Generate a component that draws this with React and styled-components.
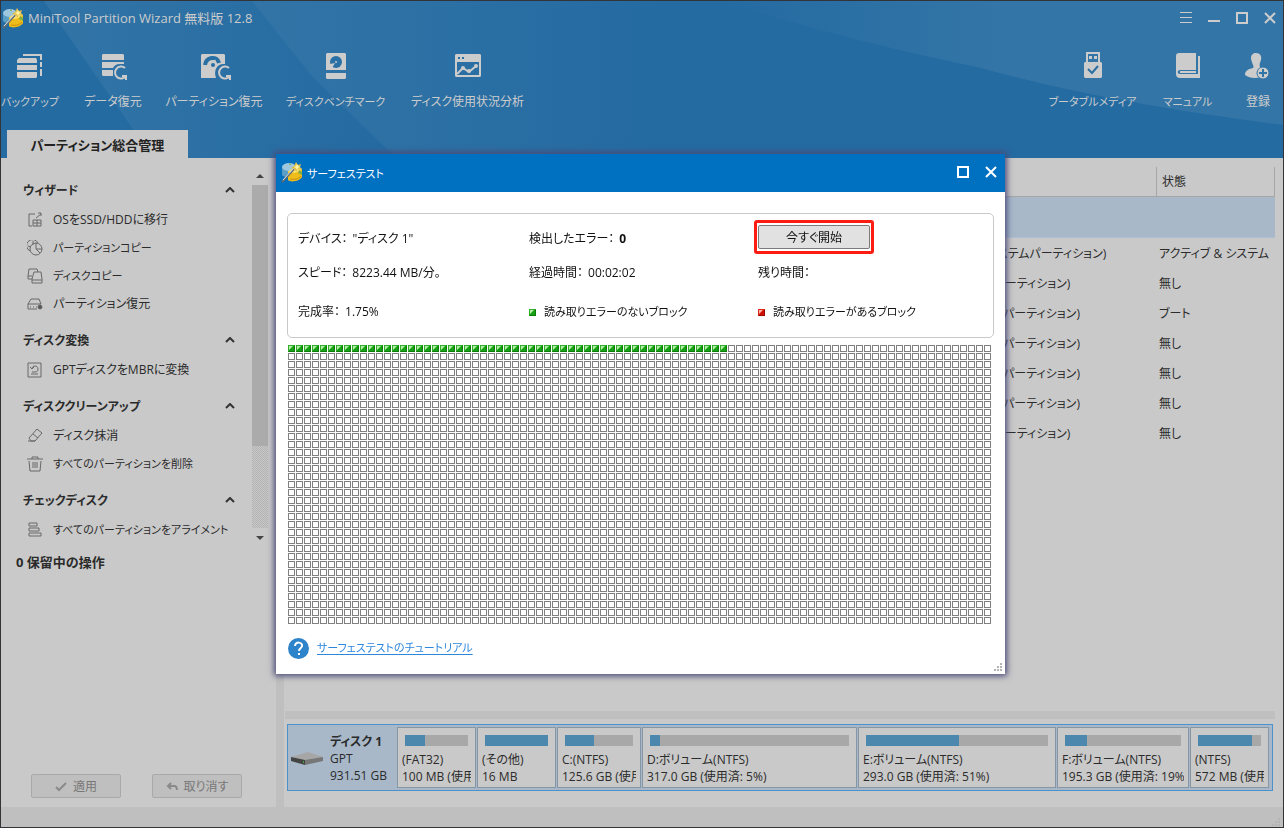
import React from 'react'
import styled, { createGlobalStyle } from 'styled-components'

const GlobalStyle = createGlobalStyle`
  * {
    box-sizing: border-box;
  }

  body {
    margin: 0;
    color: #2b2b2b;
    font-family: 'Open Sans', 'Noto Sans CJK JP', sans-serif;
    font-size: 12px;
    line-height: 18px;
    font-feature-settings: 'palt';
  }

  button {
    padding: 0;
    border: 0;
    background: none;
    color: inherit;
    font: inherit;
    font-feature-settings: inherit;
  }
`

const Window = styled.div`
  display: flex;
  flex-direction: column;
  height: 100vh;
  overflow: hidden;
  border: 1px solid #333438;
  background: #c9c9c9;
`

const Header = styled.header`
  position: relative;
  display: flex;
  flex-direction: column;
  flex: none;
  height: 157px;
  background: #246ba2;
  color: #cccccc;
`

const Backdrop = styled.svg`
  position: absolute;
  inset: 0;
  width: 100%;
  height: 100%;
`

const TitleBar = styled.div`
  position: relative;
  display: flex;
  align-items: center;
  justify-content: space-between;
  height: 34px;
  padding: 0 6px 0 1px;
`

const TitleText = styled.h1`
  display: flex;
  align-items: center;
  gap: 4px;
  margin: 0;
  font-size: ${(props) => (props.$large ? '13px' : '11px')};
  font-weight: 400;
`

const Controls = styled.div`
  display: flex;
  align-items: center;
  gap: 14px;
`

const ControlButton = styled.button`
  width: 14px;
  height: 14px;

  svg {
    display: block;
  }
`

const Toolbar = styled.nav`
  position: relative;
  display: flex;
  justify-content: space-between;
  height: 95px;
  padding: 17px 5px 0 0;
`

const ToolGroup = styled.div`
  display: flex;
  align-items: flex-start;
  gap: 25px;
`

const ToolButton = styled.button`
  display: flex;
  flex-direction: column;
  align-items: center;
  gap: 11px;
  width: ${(props) => props.$width}px;
  font-size: ${(props) => (props.$compact ? '11px' : '12px')};
  white-space: nowrap;

  svg {
    overflow: visible;
  }
`

const Tab = styled.button`
  position: relative;
  width: 181px;
  height: 28px;
  margin-left: 6px;
  padding-top: 2px;
  background: #c9c9c9;
  color: #222222;
  font-size: 13px;
  font-weight: 700;
`

const Body = styled.div`
  display: flex;
  flex: 1;
  min-height: 0;
`

const Sidebar = styled.aside`
  display: flex;
  flex-direction: column;
  flex: none;
  width: 275px;
`

const ScrollArea = styled.div`
  display: flex;
  height: 389px;
`

const Sections = styled.div`
  flex: 1;
  padding-top: 18px;
`

const Section = styled.section`
  margin-bottom: 8px;
`

const SectionTitle = styled.h2`
  display: flex;
  align-items: center;
  justify-content: space-between;
  height: 30px;
  margin: 0;
  padding: 0 17px 0 22px;
  font-size: 12px;
  font-weight: 700;
`

const SideItem = styled.button`
  display: flex;
  align-items: center;
  gap: 10px;
  width: 100%;
  height: 28px;
  padding-left: 26px;
  font-size: ${(props) => (props.$compact ? '11px' : '12px')};
  white-space: nowrap;
`

const Scrollbar = styled.div`
  display: flex;
  flex-direction: column;
  width: 16px;
  margin: 8px 8px 0 0;
`

const ScrollArrow = styled.button`
  display: flex;
  align-items: center;
  justify-content: center;
  height: 19px;
`

const ScrollTrack = styled.div`
  flex: 1;
  background: repeating-conic-gradient(#b2b2b2 0 25%, #c9c9c9 0 50%) 0 0 / 2px 2px;
`

const ScrollThumb = styled.div`
  height: 76%;
  background: #ababab;
`

const Pending = styled.p`
  margin: 6px 0 0 15px;
  font-size: 13px;
  font-weight: 700;
`

const SideActions = styled.div`
  display: flex;
  gap: 31px;
  margin: auto 0 9px 30px;
`

const ActionButton = styled.button`
  display: flex;
  align-items: center;
  justify-content: center;
  gap: 6px;
  width: 90px;
  height: 24px;
  padding-top: 2px;
  border: 1px solid #a9a9a9;
  border-radius: 2px;
  background: #bfbfbf;
  color: #777777;
`

const Splitter = styled.div`
  flex: none;
  width: 8px;
  background: #bfbfbf;
`

const Main = styled.main`
  display: flex;
  flex-direction: column;
  flex: 1;
  min-width: 0;
  padding: 9px 8px 16px 1px;
`

const Table = styled.table`
  width: 100%;
  table-layout: fixed;
  border-collapse: separate;
  border-spacing: 0;
`

const HeadCell = styled.th`
  width: ${(props) => props.$width || 'auto'};
  height: 30px;
  padding: 1px 0 0 5px;
  border-right: 1px solid #a6a6a6;
  border-bottom: 1px solid #a6a6a6;
  font-weight: 400;
  text-align: left;
`

const Row = styled.tr`
  height: ${(props) => (props.$selected ? '41px' : '30px')};

  td {
    padding: 2px 0 0 2px;
    border-bottom: ${(props) => (props.$selected ? '1px solid #afc0d4' : '0')};
    background: ${(props) => (props.$selected ? '#a8b8c9' : 'none')};
    white-space: nowrap;
  }
`

const HorizontalSplitter = styled.div`
  height: 8px;
  margin: auto 0 5px;
  background: #bfbfbf;
`

const DiskStrip = styled.div`
  display: flex;
  gap: 1px;
  height: 67px;
  margin: 0 2px;
  padding: 2px 3px 2px 0;
  border: 1px solid #4a92cb;
  background: #a8b8c9;
`

const DiskInfo = styled.div`
  display: flex;
  align-items: center;
  flex: none;
  gap: 7px;
  width: 108px;
  padding: 2px 0 0 3px;
  line-height: 17px;
  white-space: nowrap;
`

const Volume = styled.div`
  flex: ${(props) => props.$grow} 1 0;
  min-width: 0;
  padding: 7px 4px 0;
  border: 1px solid #8796a5;
  background: #c9c9c9;
  line-height: 17px;
`

const Usage = styled.div`
  height: 11px;
  margin: 0 3px 5px;
  background: #a8a8a8;
`

const Used = styled.div`
  height: 100%;
  background: #4c88ae;
`

const VolumeText = styled.div`
  overflow: hidden;
  white-space: nowrap;
`

const StatusBar = styled.footer`
  display: flex;
  align-items: flex-end;
  justify-content: flex-end;
  flex: none;
  height: 20px;
  padding: 0 2px 0 0;
  background: #bfbfbf;
`

const Overlay = styled.div`
  position: fixed;
  inset: 0;
  display: flex;
  align-items: center;
  justify-content: center;
  padding-right: 3px;
`

const Dialog = styled.section`
  background: #ffffff;
  color: #111111;
  box-shadow: 0 0 6px 2px #4a4a78;
`

const DialogTitleBar = styled.div`
  display: flex;
  align-items: center;
  justify-content: space-between;
  height: 38px;
  padding: 0 7px 2px 5px;
  background: #0070c1;
  color: #ffffff;

  span {
    padding-top: 3px;
  }
`

const DialogBody = styled.div`
  display: flex;
  flex-direction: column;
  padding: 21px 2px 2px 11px;
`

const InfoPanel = styled.div`
  display: grid;
  grid-template-columns: 231px 229px 1fr;
  grid-template-rows: 34px 34px 44px;
  align-items: center;
  height: 125px;
  margin: 0 9px 7px 0;
  padding: 8px 0 0 10px;
  border: 1px solid #c8c8c8;
  border-radius: 5px;
  white-space: nowrap;
`

const Field = styled.div`
  display: flex;
  align-items: center;
  gap: 5px;
`

const Legend = styled(Field)`
  gap: 8px;
  font-size: 11px;
`

const StartFrame = styled.div`
  align-self: start;
  width: 120px;
  height: 34px;
  margin: -2px 0 0 -4px;
  padding: 2px 1px;
  border: 3px solid #fd1c12;
  border-radius: 3px;
`

const StartButton = styled.button`
  width: 100%;
  height: 24px;
  padding-top: 1px;
  border: 1px solid #7b7b7b;
  border-radius: 2px;
  background: #e1e1e1;
`

const BlockGrid = styled.div`
  display: grid;
  grid-template-columns: repeat(88, 7px);
  grid-auto-rows: 7px;
  gap: 1px;
  width: max-content;
  margin: 0 12px 0 1px;
`

const Block = styled.span`
  width: 7px;
  height: 7px;
  border: 1px solid #808080;
  background: #ffffff;

  &.clean {
    border-color: #2fae2a #0a7c08 #0a7c08 #2fae2a;
    background: linear-gradient(135deg, #b8efaa 0 30%, #18a015 50% 100%);
  }

  &.failed {
    border-color: #e02818 #980800 #980800 #e02818;
    background: linear-gradient(135deg, #ffb4a4 0 30%, #d01008 50% 100%);
  }
`

const DialogFooter = styled.div`
  display: flex;
  align-items: center;
  gap: 8px;
  height: 48px;
  padding-left: 1px;
  font-size: 11px;

  a {
    color: #2d87dd;
    text-underline-offset: 2px;
  }
`

const GripRow = styled.div`
  display: flex;
  justify-content: flex-end;
  height: 0;
  align-items: flex-end;
`

function WandIcon() {
  return (
    <svg width="22" height="22" viewBox="0 0 22 22">
      <path d="M1 6v8c3 3 6 2 9 1V8z" fill="#5b9ec5" />
      <ellipse cx="8" cy="6" rx="7" ry="4" fill="#9cc7dd" />
      <path d="M7 10c4 2 10 1 14-2v8c-2 4-11 6-14 3z" fill="#efbd19" />
      <path d="M7 11c4 2 10 1 14-3-2-3-10-2-14 3z" fill="#ffe36a" />
      <path d="M9 18c4 1 9 0 11-3" fill="none" stroke="#c98d12" />
      <path d="M1 21L13 8" stroke="#626b73" strokeWidth="2" />
      <path d="M2 19L13 7" stroke="#dce5e5" strokeWidth="1" />
      <path d="M15 1l2 3 3-1-1 3 2 3-4-1-2 3-1-3-4-1 3-2z" fill="#e0c048" />
      <path d="M16 3l1 2 2 1-2 1-1 2-1-2-2-1 2-1z" fill="#fff3a8" />
      <path d="M18 9l3 2v3l-4-2zM9 2l1 2H8z" fill="#7fae45" />
    </svg>
  )
}

function MenuIcon() {
  return (
    <svg width="14" height="14" stroke="currentColor">
      <path d="M1 1.5h12M1 6.5h12M1 11.5h12" />
    </svg>
  )
}

function MinimizeIcon() {
  return (
    <svg width="14" height="14">
      <path d="M1 9h12v2H1z" fill="currentColor" />
    </svg>
  )
}

function MaximizeIcon() {
  return (
    <svg width="14" height="14" fill="none" stroke="currentColor" strokeWidth="2">
      <path d="M2 2h10v10H2z" />
    </svg>
  )
}

function CloseIcon() {
  return (
    <svg width="14" height="14" stroke="currentColor" strokeWidth="2">
      <path d="M2 2l10 10M12 2L2 12" />
    </svg>
  )
}

const toolIcons = {
  backup: (
    <>
      <path d="M8 3h18" stroke="currentColor" strokeWidth="2" />
      <path d="M26 2v6M26 10v5M26 17v7" stroke="currentColor" strokeWidth="2" />
      <path d="M4 6h17l1 2v3H2V8zM2 13h20v5H2zM2 20h20v5l-1 1H3l-1-1z" fill="currentColor" />
    </>
  ),
  data: (
    <>
      <path d="M5 2h20l1 1v5H4V3zM4 10h22v2h-4c-4 0-6 2-7 4H4zM4 18h11v6H5l-1-1z" fill="currentColor" />
      <path d="M27 16a6 6 0 1 0 1 8M28 28v-4h-4" fill="none" stroke="currentColor" strokeWidth="2" />
    </>
  ),
  partition: (
    <>
      <path d="M3 2h22l1 1v9c-7-1-12 5-9 14H2V3z" fill="currentColor" />
      <path d="M6 13C7 5 18 3 20 11" fill="none" stroke="#286fa4" strokeWidth="4" />
      <path d="M6 15l8-2 2-5" fill="none" stroke="currentColor" strokeWidth="2" />
      <circle cx="14" cy="13" r="2" fill="#286fa4" />
      <path d="M30 16a6 6 0 1 0 1 8M31 28v-4h-4" fill="none" stroke="currentColor" strokeWidth="2" />
    </>
  ),
  benchmark: (
    <>
      <path d="M6 1h18l1 1v16H5V2zM5 21h20v5l-1 1H6l-1-1z" fill="currentColor" />
      <circle cx="15" cy="10" r="6" fill="#2b70a4" />
      <circle cx="15" cy="10" r="1" fill="currentColor" />
      <path d="M9 12l5-1-3 5-3-1z" fill="currentColor" />
    </>
  ),
  analysis: (
    <>
      <path d="M3 2h24l1 1v21l-1 1H3l-1-1V3zM4 10v13h22V10z" fillRule="evenodd" fill="currentColor" />
      <path d="M5 5h2v2H5zM9 5h2v2H9z" fill="#286fa4" />
      <path d="M4 22l6-6 6 4 7-6" fill="none" stroke="currentColor" strokeWidth="2" />
      <circle cx="10" cy="16" r="2" fill="currentColor" />
      <circle cx="16" cy="19" r="2" fill="currentColor" />
      <circle cx="23" cy="14" r="2" fill="currentColor" />
    </>
  ),
  bootable: (
    <>
      <path d="M8 0h14v10h1l1 1v14l-1 1H7l-1-1V11l1-1h1zM10 2v8h10V2z" fillRule="evenodd" fill="currentColor" />
      <path d="M11 4h3v3h-3zM16 4h3v3h-3z" fill="currentColor" />
      <path d="M10 17l4 4 6-7" fill="none" stroke="#286fa4" strokeWidth="2" />
    </>
  ),
  manual: (
    <>
      <path d="M6 1h17v17H7c-3 0-3 4 0 4h18V4h2v22H7c-3 0-4-2-4-4V4c0-2 1-3 3-3z" fill="currentColor" />
      <path d="M7 19h16v2H7z" fill="currentColor" />
    </>
  ),
  register: (
    <>
      <path d="M13 1c4 0 6 3 5 7-1 3-2 4-1 7 1 2-1 5 0 8l1 2C12 27 6 26 2 23c0-4 3-6 8-7 2-1-2-6-2-10 0-3 2-5 5-5z" fill="currentColor" />
      <circle cx="20" cy="21" r="6" fill="currentColor" stroke="#3174a6" strokeWidth="1" />
      <path d="M20 17v8M16 21h8" stroke="#3174a6" strokeWidth="2" />
    </>
  )
}

const sideIcons = {
  migrate: <path d="M8 2H2v12h3M6 8h8v6H6zM6 11h8M10 8v6M9 6l5-4M11 1h3v3" />,
  partitionCopy: (
    <>
      <path d="M3 11A6 6 0 1 1 11 3M6 1v4M1 6l3 1" />
      <circle cx="9" cy="9" r="6" />
      <path d="M9 3v6h6M9 9l4 4" />
    </>
  ),
  diskCopy: <path d="M5 11H1V8l1-7h8l1 3M1 8h4M7 4h7l1 7v4H5v-4zM5 12h10" />,
  recover: (
    <>
      <path d="M1 8l3-5h8l2 5M1 8h13M1 8v5h9M3 11h1M6 11h1M9 11h1" />
      <circle cx="13" cy="11" r="2" fill="currentColor" />
    </>
  ),
  convert: <path d="M1 1h13v14H1zM4 12h7M5 7c0-4 6-4 6 0 0 2-1 3-3 3H5M3 5l2 2 2-2" />,
  wipe: <path d="M10 1l5 4-7 8H4l-2-3zM6 6l5 4M1 13h7" />,
  remove: <path d="M0 3h16M5 3V1h6v2M2 5l1 10h10l1-10M6 6v6M8 6v6M10 6v6" />,
  align: <path d="M2 1h8v3H2zM2 6h10v3H2zM2 11h12v3H2z" />
}

const tools = [
  { icon: 'backup', label: 'バックアップ', width: 58, compact: true },
  { icon: 'data', label: 'データ復元', width: 58 },
  { icon: 'partition', label: 'パーティション復元', width: 94 },
  { icon: 'benchmark', label: 'ディスクベンチマーク', width: 99, compact: true },
  { icon: 'analysis', label: 'ディスク使用状況分析', width: 115 }
]

const sideTools = [
  { icon: 'bootable', label: 'ブータブルメディア', width: 89, compact: true },
  { icon: 'manual', label: 'マニュアル', width: 51, compact: true },
  { icon: 'register', label: '登録', width: 40 }
]

const sections = [
  {
    title: 'ウィザード',
    items: [
      { icon: 'migrate', label: 'OSをSSD/HDDに移行' },
      { icon: 'partitionCopy', label: 'パーティションコピー', compact: true },
      { icon: 'diskCopy', label: 'ディスクコピー', compact: true },
      { icon: 'recover', label: 'パーティション復元' }
    ]
  },
  { title: 'ディスク変換', items: [{ icon: 'convert', label: 'GPTディスクをMBRに変換' }] },
  {
    title: 'ディスククリーンアップ',
    items: [
      { icon: 'wipe', label: 'ディスク抹消' },
      { icon: 'remove', label: 'すべてのパーティションを削除', compact: true }
    ]
  },
  {
    title: 'チェックディスク',
    items: [{ icon: 'align', label: 'すべてのパーティションをアライメント', compact: true }]
  }
]

const partitions = [
  { type: 'GPT (EFIシステムパーティション)', status: 'アクティブ & システム' },
  { type: 'GPT (予約パーティション)', status: '無し' },
  { type: 'GPT (データパーティション)', status: 'ブート' },
  { type: 'GPT (データパーティション)', status: '無し' },
  { type: 'GPT (データパーティション)', status: '無し' },
  { type: 'GPT (データパーティション)', status: '無し' },
  { type: 'GPT (回復パーティション)', status: '無し' }
]

const volumes = [
  { name: '(FAT32)', size: '100 MB (使用済: 32%)', used: 32, grow: 69 },
  { name: '(その他)', size: '16 MB', used: 100, grow: 69 },
  { name: 'C:(NTFS)', size: '125.6 GB (使用済: 42%)', used: 42, grow: 74 },
  { name: 'D:ボリューム(NTFS)', size: '317.0 GB (使用済: 5%)', used: 5, grow: 205 },
  { name: 'E:ボリューム(NTFS)', size: '293.0 GB (使用済: 51%)', used: 51, grow: 188 },
  { name: 'F:ボリューム(NTFS)', size: '195.3 GB (使用済: 19%)', used: 19, grow: 122 },
  { name: '(NTFS)', size: '572 MB (使用済: 86%)', used: 86, grow: 69 }
]

const blocks = Array.from({ length: 88 * 35 }, (_, i) => i < 55)

function Tool({ tool }) {
  return (
    <ToolButton $width={tool.width} $compact={tool.compact}>
      <svg width="30" height="30">
        {toolIcons[tool.icon]}
      </svg>
      {tool.label}
    </ToolButton>
  )
}

function SizeGrip() {
  return (
    <svg width="10" height="9" fill="#b4b4b4">
      <path d="M7 0h2v2H7zM4 3h2v2H4zM7 3h2v2H7zM1 6h2v2H1zM4 6h2v2H4zM7 6h2v2H7z" />
    </svg>
  )
}

function AppHeader() {
  return (
    <Header>
      <Backdrop viewBox="0 0 1282 157" preserveAspectRatio="none">
        <defs>
          <linearGradient id="beam" x1="0" y1="0" x2="1" y2="0">
            <stop offset="0" stopColor="#3274a6" />
            <stop offset="1" stopColor="#246ba2" />
          </linearGradient>
          <linearGradient id="glow" x1="0" y1="0" x2="1" y2="0">
            <stop offset="0" stopColor="#246ba2" />
            <stop offset="0.5" stopColor="#3375a6" />
          </linearGradient>
        </defs>
        <path d="M43 0H320L390 157H152z" fill="url(#beam)" />
        <path d="M251 0H660V157H395L310 74z" fill="url(#beam)" />
        <path d="M720 0H1282V124Q1100 101 980 67Q840 38 720 0z" fill="url(#glow)" />
      </Backdrop>
      <TitleBar>
        <TitleText $large>
          <WandIcon />
          MiniTool Partition Wizard 無料版 12.8
        </TitleText>
        <Controls>
          <ControlButton aria-label="メニュー"><MenuIcon /></ControlButton>
          <ControlButton aria-label="最小化"><MinimizeIcon /></ControlButton>
          <ControlButton aria-label="最大化"><MaximizeIcon /></ControlButton>
          <ControlButton aria-label="閉じる"><CloseIcon /></ControlButton>
        </Controls>
      </TitleBar>
      <Toolbar>
        <ToolGroup>
          {tools.map((tool) => <Tool key={tool.icon} tool={tool} />)}
        </ToolGroup>
        <ToolGroup>
          {sideTools.map((tool) => <Tool key={tool.icon} tool={tool} />)}
        </ToolGroup>
      </Toolbar>
      <Tab>パーティション総合管理</Tab>
    </Header>
  )
}

function AppSidebar() {
  return (
    <Sidebar>
      <ScrollArea>
        <Sections>
          {sections.map((section) => (
            <Section key={section.title}>
              <SectionTitle>
                {section.title}
                <svg width="10" height="8" fill="none" stroke="#333333" strokeWidth="2">
                  <path d="M1 5l4-4 4 4" />
                </svg>
              </SectionTitle>
              {section.items.map((item) => (
                <SideItem key={item.label} $compact={item.compact}>
                  <svg width="16" height="16" fill="none" stroke="#686868" color="#555555">
                    {sideIcons[item.icon]}
                  </svg>
                  {item.label}
                </SideItem>
              ))}
            </Section>
          ))}
        </Sections>
        <Scrollbar>
          <ScrollArrow aria-label="上へスクロール">
            <svg width="8" height="4"><path d="M0 4l4-4 4 4z" fill="#444444" /></svg>
          </ScrollArrow>
          <ScrollTrack>
            <ScrollThumb />
          </ScrollTrack>
          <ScrollArrow aria-label="下へスクロール">
            <svg width="8" height="4"><path d="M0 0l4 4 4-4z" fill="#444444" /></svg>
          </ScrollArrow>
        </Scrollbar>
      </ScrollArea>
      <Pending>0 保留中の操作</Pending>
      <SideActions>
        <ActionButton disabled>
          <svg width="12" height="10" fill="none" stroke="#8a8a8a" strokeWidth="2">
            <path d="M1 5l3 3 7-7" />
          </svg>
          適用
        </ActionButton>
        <ActionButton disabled>
          <svg width="12" height="10" fill="none" stroke="#8a8a8a" strokeWidth="2">
            <path d="M5 1L2 4l3 3M2 4h6c2 0 3 1 3 4" />
          </svg>
          取り消す
        </ActionButton>
      </SideActions>
    </Sidebar>
  )
}

function DiskMap() {
  return (
    <DiskStrip>
      <DiskInfo>
        <svg width="32" height="14">
          <path d="M0 5L17 0l15 5-18 4z" fill="#a6a6a6" />
          <path d="M0 5l14 3v5L0 9z" fill="#444444" />
          <path d="M14 8l18-3v4l-18 4z" fill="#777777" />
          <path d="M12 9h1v2h-1z" fill="#42a546" />
        </svg>
        <div>
          <strong>ディスク 1</strong>
          <div>GPT</div>
          <div>931.51 GB</div>
        </div>
      </DiskInfo>
      {volumes.map((volume) => (
        <Volume key={volume.size} $grow={volume.grow}>
          <Usage>
            <Used style={{ width: `${volume.used}%` }} />
          </Usage>
          <VolumeText>{volume.name}</VolumeText>
          <VolumeText>{volume.size}</VolumeText>
        </Volume>
      ))}
    </DiskStrip>
  )
}

function SurfaceTestDialog() {
  return (
    <Overlay>
      <Dialog role="dialog" aria-label="サーフェステスト">
        <DialogTitleBar>
          <TitleText as="h2">
            <WandIcon />
            <span>サーフェステスト</span>
          </TitleText>
          <Controls>
            <ControlButton aria-label="最大化"><MaximizeIcon /></ControlButton>
            <ControlButton aria-label="閉じる"><CloseIcon /></ControlButton>
          </Controls>
        </DialogTitleBar>
        <DialogBody>
          <InfoPanel>
            <Field>
              <span>デバイス：</span>
              <span>"ディスク 1"</span>
            </Field>
            <Field>
              <span>検出したエラー：</span>
              <strong>0</strong>
            </Field>
            <StartFrame>
              <StartButton>今すぐ開始</StartButton>
            </StartFrame>
            <Field>
              <span>スピード：</span>
              <span>8223.44 MB/分。</span>
            </Field>
            <Field>
              <span>経過時間：</span>
              <span>00:02:02</span>
            </Field>
            <Field>残り時間：</Field>
            <Field>
              <span>完成率：</span>
              <span>1.75%</span>
            </Field>
            <Legend>
              <Block className="clean" />
              読み取りエラーのないブロック
            </Legend>
            <Legend>
              <Block className="failed" />
              読み取りエラーがあるブロック
            </Legend>
          </InfoPanel>
          <BlockGrid>
            {blocks.map((clean, i) => <Block key={i} className={clean ? 'clean' : undefined} />)}
          </BlockGrid>
          <DialogFooter>
            <svg width="21" height="21" fill="none" stroke="#ffffff" strokeWidth="2">
              <circle cx="10.5" cy="10.5" r="10.5" fill="#2e84ca" stroke="none" />
              <path d="M7 8c0-5 8-4 7 0 0 2-3 2-3 5M11 15v2" />
            </svg>
            <a href="#tutorial">サーフェステストのチュートリアル</a>
          </DialogFooter>
          <GripRow>
            <SizeGrip />
          </GripRow>
        </DialogBody>
      </Dialog>
    </Overlay>
  )
}

function App() {
  return (
    <>
      <GlobalStyle />
      <Window>
        <AppHeader />
        <Body>
          <AppSidebar />
          <Splitter />
          <Main>
            <Table>
              <thead>
                <tr>
                  <HeadCell $width="66%" />
                  <HeadCell />
                  <HeadCell $width="118px">状態</HeadCell>
                </tr>
              </thead>
              <tbody>
                <Row $selected>
                  <td colSpan={3} />
                </Row>
                {partitions.map((partition, i) => (
                  <Row key={i}>
                    <td />
                    <td>{partition.type}</td>
                    <td>{partition.status}</td>
                  </Row>
                ))}
              </tbody>
            </Table>
            <HorizontalSplitter />
            <DiskMap />
          </Main>
        </Body>
        <StatusBar>
          <SizeGrip />
        </StatusBar>
      </Window>
      <SurfaceTestDialog />
    </>
  )
}

export default App
